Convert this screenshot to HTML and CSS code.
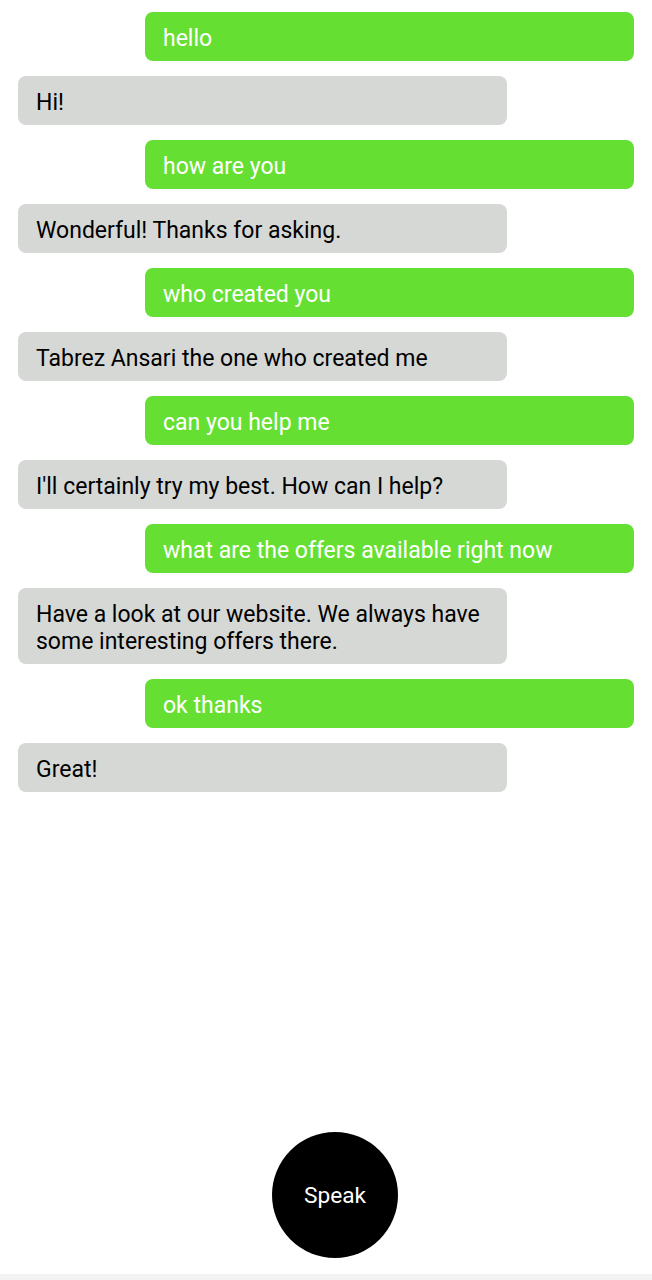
FILE: index.html
```html
<!DOCTYPE html>
<html>
<head>
<meta charset="utf-8">
<link rel="stylesheet" href="styles.css">
</head>
<body>
<div class="app">
  <div class="chat">
    <div class="msg user">hello</div>
    <div class="msg bot">Hi!</div>
    <div class="msg user">how are you</div>
    <div class="msg bot">Wonderful! Thanks for asking.</div>
    <div class="msg user">who created you</div>
    <div class="msg bot">Tabrez Ansari the one who created me</div>
    <div class="msg user">can you help me</div>
    <div class="msg bot">I'll certainly try my best. How can I help?</div>
    <div class="msg user">what are the offers available right now</div>
    <div class="msg bot">Have a look at our website. We always have some interesting offers there.</div>
    <div class="msg user">ok thanks</div>
    <div class="msg bot">Great!</div>
  </div>
  <div class="footer">
    <button class="speak">Speak</button>
  </div>
  <div class="strip"></div>
</div>
</body>
</html>
```

FILE: styles.css
```css
* { box-sizing: border-box; }
html, body { margin: 0; padding: 0; background: #fff; }
body { font-family: Roboto, "Noto Sans", sans-serif; }
.app {
  height: 1280px;
  display: flex;
  flex-direction: column;
}
.chat {
  flex: 1;
  display: flex;
  flex-direction: column;
  gap: 15px;
  padding: 12px 18px 0 18px;
}
.msg {
  width: 489px;
  border-radius: 8px;
  padding: 13px 18px 9px 18px;
  font-size: 23px;
  line-height: 27px;
}
.user {
  align-self: flex-end;
  background: #66df33;
  color: #fff;
}
.bot {
  align-self: flex-start;
  background: #d6d8d6;
  color: #000;
}
.footer {
  display: flex;
  justify-content: center;
  padding-bottom: 16px;
}
.speak {
  width: 126px;
  height: 126px;
  border-radius: 50%;
  border: none;
  background: #000;
  color: #fff;
  font-family: Roboto, "Noto Sans", sans-serif;
  font-size: 22.7px;
  margin-left: 18px;
  padding: 0;
}
.strip {
  height: 6px;
  background: #f3f3f3;
}
```
